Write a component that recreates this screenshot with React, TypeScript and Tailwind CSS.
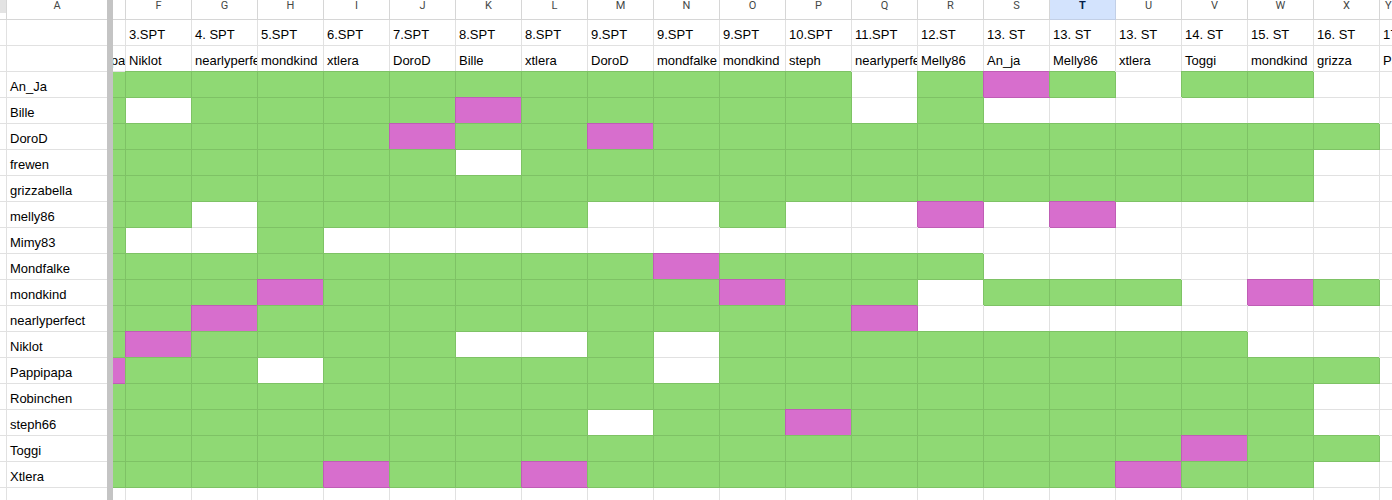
import React from 'react';

type Kind = 'G' | 'P' | 'W';

const COLS = ['F', 'G', 'H', 'I', 'J', 'K', 'L', 'M', 'N', 'O', 'P', 'Q', 'R', 'S', 'T', 'U', 'V', 'W', 'X'];

const ROUND = ['3.SPT', '4. SPT', '5.SPT', '6.SPT', '7.SPT', '8.SPT', '8.SPT', '9.SPT', '9.SPT', '9.SPT', '10.SPT', '11.SPT', '12.ST', '13. ST', '13. ST', '13. ST', '14. ST', '15. ST', '16. ST'];

const HOSTS = ['Niklot', 'nearlyperfect', 'mondkind', 'xtlera', 'DoroD', 'Bille', 'xtlera', 'DoroD', 'mondfalke', 'mondkind', 'steph', 'nearlyperfect', 'Melly86', 'An_ja', 'Melly86', 'xtlera', 'Toggi', 'mondkind', 'grizza'];

// columns E..X, one letter per cell
const PLAYERS: { name: string; cells: string }[] = [
  { name: 'An_Ja', cells: 'GGGGGGGGGGGGWGPGWGGW' },
  { name: 'Bille', cells: 'GWGGGGPGGGGGWGWWWWWW' },
  { name: 'DoroD', cells: 'GGGGGPGGPGGGGGGGGGGG' },
  { name: 'frewen', cells: 'GGGGGGWGGGGGGGGGGGGW' },
  { name: 'grizzabella', cells: 'GGGGGGGGGGGGGGGGGGGW' },
  { name: 'melly86', cells: 'GGWGGGGGWWGWWPWPWWWW' },
  { name: 'Mimy83', cells: 'GWWGWWWWWWWWWWWWWWWW' },
  { name: 'Mondfalke', cells: 'GGGGGGGGGPGGGGWWWWWW' },
  { name: 'mondkind', cells: 'GGGPGGGGGGPGGWGGGWPG' },
  { name: 'nearlyperfect', cells: 'GGPGGGGGGGGGPWWWWWWW' },
  { name: 'Niklot', cells: 'GPGGGGWWGWGGGGGGGGWW' },
  { name: 'Pappipapa', cells: 'PGGWGGGGGWGGGGGGGGGG' },
  { name: 'Robinchen', cells: 'GGGGGGGGGGGGGGGGGGGW' },
  { name: 'steph66', cells: 'GGGGGGGGWGGPGGGGGGGW' },
  { name: 'Toggi', cells: 'GGGGGGGGGGGGGGGGGPGG' },
  { name: 'Xtlera', cells: 'GGGGPGGPGGGGGGGGPGGW' },
];

const KIND_CLASS: Record<Kind, string> = {
  G: 'bg-[#8fd974] border-[#7ec265] shadow-[-1px_-1px_0_0_#7ec265]',
  P: 'bg-[#d76ecd] border-[#bf5db5] shadow-[-1px_-1px_0_0_#bf5db5]',
  W: 'bg-white border-[#e1e1e1]',
};

const textCell = 'flex items-end px-[3px] pb-[2px] leading-[16px] whitespace-nowrap overflow-hidden';

function Row({ label, kinds, texts, eText, yText }: { label?: string; kinds?: string; texts?: string[]; eText?: string; yText?: string }) {
  const e = (kinds?.[0] ?? 'W') as Kind;
  return (
    <div className="flex h-[26px] shrink-0">
      <div className="w-[7px] shrink-0 border-r border-b border-[#e1e1e1]" />
      <div className={`w-[100px] shrink-0 border-b border-[#e1e1e1] ${textCell}`}>{label}</div>
      <div className="w-[6px] shrink-0 bg-[#c4c4c4]" />
      <div className={`w-[13px] shrink-0 overflow-hidden border-r border-b ${e === 'W' ? 'bg-white border-[#e1e1e1]' : e === 'G' ? 'bg-[#8fd974] border-[#7ec265]' : 'bg-[#d76ecd] border-[#bf5db5]'}`}>
        <div className={`-ml-[53px] w-[66px] h-full ${textCell}`}>{eText}</div>
      </div>
      {COLS.map((c, i) => {
        const k = (kinds?.[i + 1] ?? 'W') as Kind;
        return (
          <div key={c} className={`w-[66px] shrink-0 border-r border-b ${KIND_CLASS[k]} ${textCell}`}>
            {texts?.[i]}
          </div>
        );
      })}
      <div className={`flex-1 border-b border-[#e1e1e1] ${textCell}`}>{yText}</div>
    </div>
  );
}

export default function App() {
  return (
    <div className="w-[1392px] h-[500px] overflow-hidden bg-white text-black text-[13px] font-['Liberation_Sans',Arial,sans-serif] flex flex-col">
      {/* column letters */}
      <div className="flex h-[20px] shrink-0 text-[11px] leading-[11px] text-[#444746] font-['Roboto',sans-serif]">
        <div className="w-[7px] shrink-0 border-r border-b border-[#d6d6d6]">
          <div className="h-[13px] bg-[#e3e3e3]" />
        </div>
        <div className="w-[100px] shrink-0 border-b border-[#d6d6d6] flex justify-center">A</div>
        <div className="w-[6px] shrink-0 bg-[#c4c4c4]" />
        <div className="w-[13px] shrink-0 border-r border-b border-[#d6d6d6]" />
        {COLS.map((c) => (
          <div
            key={c}
            className={`w-[66px] shrink-0 border-r border-b flex justify-center ${
              c === 'T' ? 'bg-[#d3e3fd] border-[#c2cfe6] text-[#041e49] font-bold' : 'border-[#d6d6d6]'
            }`}
          >
            {c}
          </div>
        ))}
        <div className="flex-1 border-b border-[#d6d6d6] pl-[5px]">Y</div>
      </div>

      <Row texts={ROUND} yText="17. ST" />
      <Row texts={HOSTS} eText="Pappipapa" yText="Pappipapa" />
      {PLAYERS.map((p) => (
        <Row key={p.name} label={p.name} kinds={p.cells} />
      ))}
      <Row />
    </div>
  );
}
